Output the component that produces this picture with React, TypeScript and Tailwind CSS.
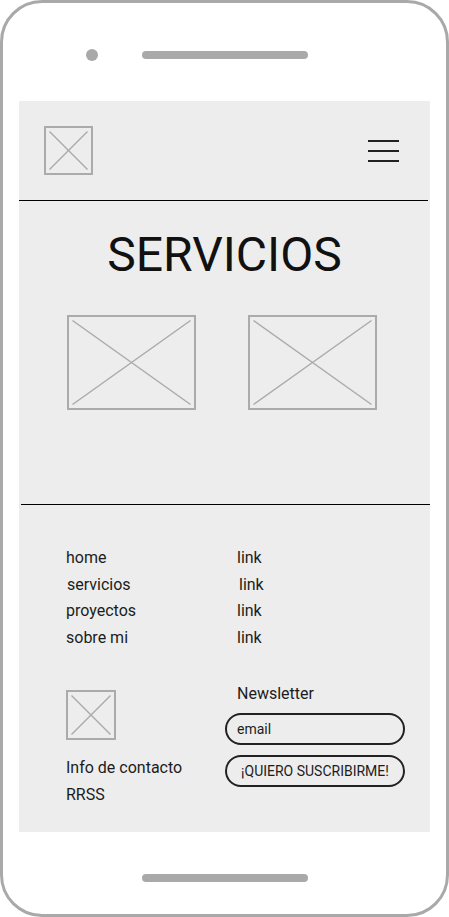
import React from "react";

const Placeholder: React.FC<{ w: number; h: number }> = ({ w, h }) => {
  return (
    <svg width={w} height={h} viewBox={`0 0 ${w} ${h}`} className="block shrink-0">
      <rect x={1} y={1} width={w - 2} height={h - 2} fill="none" stroke="#ababab" strokeWidth={2} />
      <line x1={5.5} y1={5.5} x2={w - 5.5} y2={h - 5.5} stroke="#ababab" strokeWidth={1.5} />
      <line x1={w - 5.5} y1={5.5} x2={5.5} y2={h - 5.5} stroke="#ababab" strokeWidth={1.5} />
    </svg>
  );
};

const links = [
  { label: "home", shift: "" },
  { label: "servicios", shift: "ml-px" },
  { label: "proyectos", shift: "" },
  { label: "sobre mi", shift: "" },
];

const App: React.FC = () => {
  return (
    <div className="w-[449px] h-[917px] bg-white font-['Roboto',sans-serif] text-[#1c1c1c]">
      <div className="w-full h-full box-border border-[3px] border-[#a9a9a9] rounded-[42px] flex flex-col items-center overflow-hidden">
        {/* top of phone */}
        <div className="w-full h-[98px] pt-[46px] pl-[83px] flex items-start">
          <div className="w-[12px] h-[12px] rounded-full bg-[#a9a9a9]" />
          <div className="mt-[2px] ml-[44px] w-[166px] h-[8px] rounded-full bg-[#a9a9a9]" />
        </div>

        {/* screen */}
        <div className="w-[411px] h-[731px] bg-[#ededed] flex flex-col">
          <header className="h-[99px] pl-[25px] pr-[31px] flex items-center justify-between">
            <Placeholder w={49} h={49} />
            <div className="flex flex-col gap-[8px]">
              <div className="w-[31px] h-[2px] bg-[#222]" />
              <div className="w-[31px] h-[2px] bg-[#222]" />
              <div className="w-[31px] h-[2px] bg-[#222]" />
            </div>
          </header>
          <div className="w-[409px] h-px bg-black" />

          <section className="h-[302px] flex flex-col items-center">
            <h1 className="mt-[26px] text-[48px] leading-[56px] font-normal text-[#111]">SERVICIOS</h1>
            <div className="mt-[32px] w-full pl-[48px] flex gap-[52px]">
              <Placeholder w={129} h={95} />
              <Placeholder w={129} h={95} />
            </div>
          </section>
          <div className="mt-px ml-[2px] w-[409px] h-px bg-black" />

          <footer className="pt-[40px] pl-[47px] flex flex-col">
            <div className="flex flex-col">
              {links.map((l) => (
                <div key={l.label} className="flex text-[16px] leading-[26.5px]">
                  <span className={`w-[171px] ${l.shift}`}>{l.label}</span>
                  <span className={l.shift}>link</span>
                </div>
              ))}
            </div>

            <div className="flex">
              <div className="w-[159px] pt-[39px] flex flex-col">
                <Placeholder w={50} h={50} />
                <p className="mt-[13.5px] text-[16px] leading-[27.5px]">Info de contacto</p>
                <p className="text-[16px] leading-[27.5px]">RRSS</p>
              </div>
              <div className="w-[180px] pt-[33px] flex flex-col">
                <p className="pl-[12px] text-[16px] leading-[20px]">Newsletter</p>
                <div className="mt-[9px] h-[32px] rounded-full border-2 border-[#222] pl-[10px] flex items-center text-[14px]">
                  email
                </div>
                <button className="mt-[10px] h-[32px] rounded-full border-2 border-[#222] flex items-center justify-center text-[14px] text-[#1c1c1c]">
                  ¡QUIERO SUSCRIBIRME!
                </button>
              </div>
            </div>
          </footer>
        </div>

        {/* bottom of phone */}
        <div className="mt-[42px] w-[166px] h-[8px] rounded-full bg-[#a9a9a9]" />
      </div>
    </div>
  );
};

export default App;
